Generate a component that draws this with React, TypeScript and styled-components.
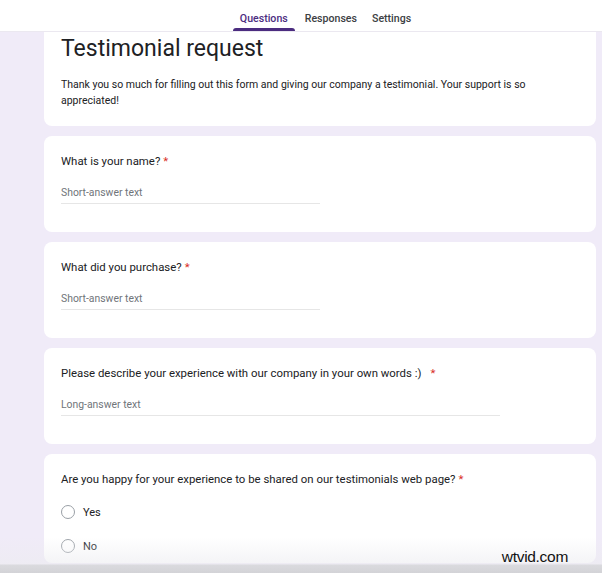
import React from 'react';
import styled, { createGlobalStyle } from 'styled-components';

const GlobalStyle = createGlobalStyle`
  html, body {
    margin: 0;
    padding: 0;
    background: #f0ebf8;
    font-family: Roboto, "Liberation Sans", Arial, sans-serif;
    color: #202124;
  }
`;

const Page = styled.div`
  position: relative;
  height: 573px;
  overflow: hidden;
  display: flex;
  flex-direction: column;
  background: #f0ebf8;
`;

const TopBar = styled.header`
  height: 32px;
  flex-shrink: 0;
  background: #fff;
  border-bottom: 1px solid #ebe8f0;
  box-sizing: border-box;
  display: flex;
  padding: 0 6px 0 53px;
  position: relative;
  z-index: 2;
`;

const Tabs = styled.nav`
  flex: 1;
  display: flex;
  justify-content: center;
  gap: 5px;
`;

const Tab = styled.div<{ $active?: boolean }>`
  position: relative;
  padding: 6px ${p => (p.$active ? 7 : 5)}px 0;
  display: flex;
  align-items: center;
  font-size: 10.6px;
  font-weight: 500;
  color: ${p => (p.$active ? '#4b2c7f' : '#3c4043')};

  &::after {
    content: '';
    display: ${p => (p.$active ? 'block' : 'none')};
    position: absolute;
    left: 0;
    right: 0;
    bottom: 0;
    height: 3px;
    border-radius: 3px 3px 0 0;
    background: #4b2c7f;
  }
`;

const Main = styled.main`
  display: flex;
  flex-direction: column;
  gap: 10px;
  padding: 0 6px 0 44px;
`;

const Card = styled.section<{ $head?: boolean }>`
  background: #fff;
  border-radius: ${p => (p.$head ? '0 0 8px 8px' : '8px')};
  padding: ${p => (p.$head ? '1px 17px 17px' : '17px 17px 0')};
  min-height: ${p => (p.$head ? 'auto' : '96px')};
  box-sizing: border-box;
`;

const Title = styled.h1`
  margin: 0;
  font-size: 23px;
  font-weight: 400;
  line-height: 32px;
  color: #202124;
`;

const Description = styled.p`
  margin: 12px 0 0;
  font-size: 10.5px;
  line-height: 16px;
  color: #202124;
`;

const Question = styled.div`
  font-size: 11.4px;
  line-height: 16px;
  color: #202124;
`;

const Required = styled.span<{ $gap?: number }>`
  color: #d93025;
  margin-left: ${p => p.$gap ?? 3}px;
`;

const AnswerField = styled.div<{ $width: number }>`
  margin-top: 16px;
  width: ${p => p.$width}px;
  padding-bottom: 2px;
  border-bottom: 1px solid #e6e6e6;
  font-size: 10.4px;
  line-height: 16px;
  color: #70757a;
`;

const Options = styled.div`
  margin-top: 8px;
  display: flex;
  flex-direction: column;
`;

const Option = styled.label`
  height: 34px;
  display: flex;
  align-items: center;
  gap: 8px;
  font-size: 11px;
  color: #202124;
`;

const Radio = styled.span`
  width: 14px;
  height: 14px;
  border-radius: 50%;
  border: 1.5px solid #9aa0a6;
  box-sizing: border-box;
`;

const BottomShade = styled.div`
  position: absolute;
  left: 0;
  right: 0;
  bottom: 0;
  height: 36px;
  background: linear-gradient(
    to bottom,
    rgba(240, 240, 244, 0) 0px,
    rgba(236, 236, 240, 0.6) 27px,
    #dadade 28px,
    #d3d3d7 36px
  );
  z-index: 3;
`;

const Watermark = styled.span`
  position: absolute;
  right: 34px;
  bottom: 7px;
  font-family: "Liberation Sans", Arial, sans-serif;
  font-size: 15.5px;
  letter-spacing: -0.3px;
  color: #111;
  z-index: 4;
`;

type Item =
  | { kind: 'text'; label: string; placeholder: string; width: number; gap?: number }
  | { kind: 'choice'; label: string; options: string[] };

const items: Item[] = [
  { kind: 'text', label: 'What is your name?', placeholder: 'Short-answer text', width: 259 },
  { kind: 'text', label: 'What did you purchase?', placeholder: 'Short-answer text', width: 259 },
  {
    kind: 'text',
    label: 'Please describe your experience with our company in your own words :)',
    placeholder: 'Long-answer text',
    width: 439,
    gap: 9,
  },
  {
    kind: 'choice',
    label: 'Are you happy for your experience to be shared on our testimonials web page?',
    options: ['Yes', 'No'],
  },
];

export default function App() {
  return (
    <>
      <GlobalStyle />
      <Page>
        <TopBar>
          <Tabs>
            <Tab $active>Questions</Tab>
            <Tab>Responses</Tab>
            <Tab>Settings</Tab>
          </Tabs>
        </TopBar>

        <Main>
          <Card $head>
            <Title>Testimonial request</Title>
            <Description>
              Thank you so much for filling out this form and giving our company a testimonial. Your
              support is so appreciated!
            </Description>
          </Card>

          {items.map(item => (
            <Card key={item.label}>
              <Question>
                {item.label}
                <Required $gap={item.kind === 'text' ? item.gap : undefined}>*</Required>
              </Question>
              {item.kind === 'text' ? (
                <AnswerField $width={item.width}>{item.placeholder}</AnswerField>
              ) : (
                <Options>
                  {item.options.map(opt => (
                    <Option key={opt}>
                      <Radio />
                      {opt}
                    </Option>
                  ))}
                </Options>
              )}
            </Card>
          ))}
        </Main>

        <BottomShade />
        <Watermark>wtvid.com</Watermark>
      </Page>
    </>
  );
}
